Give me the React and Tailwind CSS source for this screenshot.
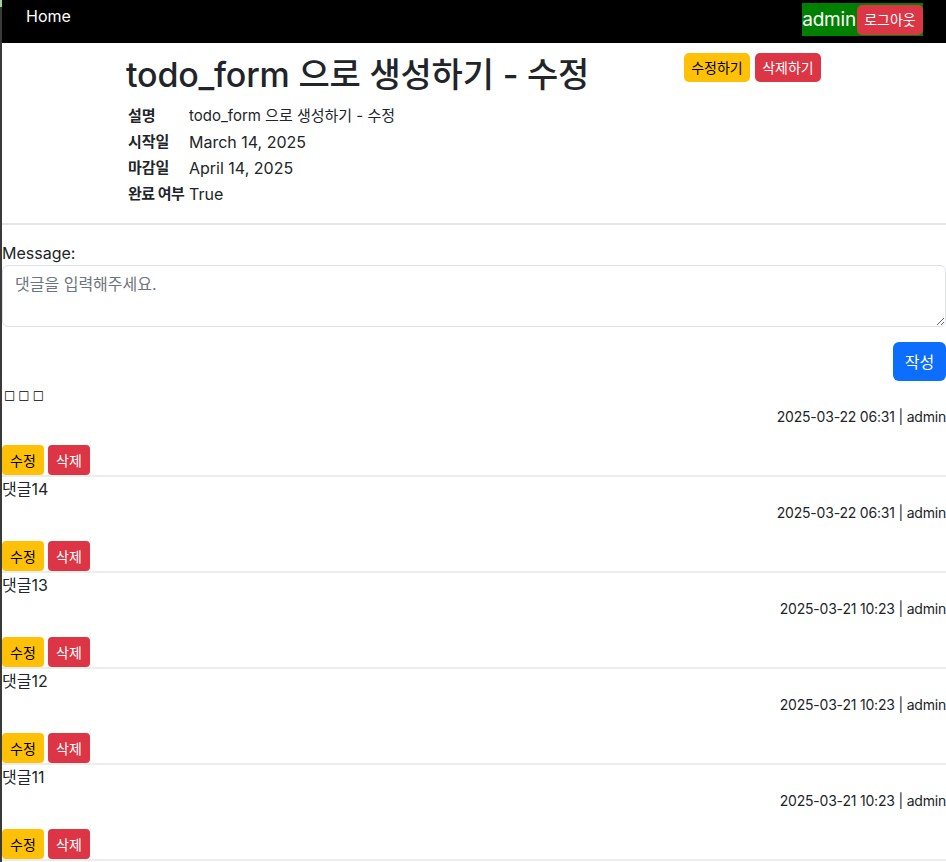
import React from "react";

const comments = [
  { text: "□□□", date: "2025-03-22 06:31", box: true },
  { text: "댓글14", date: "2025-03-22 06:31" },
  { text: "댓글13", date: "2025-03-21 10:23" },
  { text: "댓글12", date: "2025-03-21 10:23" },
  { text: "댓글11", date: "2025-03-21 10:23" },
];

export default function App() {
  return (
    <div
      className="flex min-h-[862px] bg-white text-[#212529]"
      style={{ fontFamily: "Inter, 'Noto Sans CJK KR', sans-serif" }}
    >
      <div className="w-[2px] shrink-0 flex flex-col">
        <div className="h-[7px] bg-[#9fd49f]" />
        <div className="flex-1 bg-[#3a3a3a]" />
      </div>
      <div className="flex-1 min-w-0">
        {/* Navbar */}
        <nav className="h-[43px] bg-black flex items-start justify-between">
          <a className="ml-[24px] mt-[5px] text-white text-[16px] leading-[22px]">Home</a>
          <div className="mr-[23px] mt-[3px] h-[33px] bg-[#008000] flex items-center">
            <span className="text-white text-[19px] leading-[24px] tracking-[-0.2px]">admin</span>
            <button className="ml-[1px] w-[66px] h-[30px] rounded-[5px] bg-[#dc3545] text-white text-[14px] leading-[20px]">
              로그아웃
            </button>
          </div>
        </nav>

        {/* Header */}
        <div className="w-[720px] mx-auto px-[12px] pt-[12px] -translate-x-[1px]">
          <div className="flex justify-between items-start">
            <h1 className="text-[34px] leading-[40px] font-medium ml-[1px] tracking-[-0.2px]">
              todo_form 으로 생성하기 - 수정
            </h1>
            <div className="flex gap-[5px] -mt-[2px]">
              <button className="w-[66px] h-[29px] rounded-[5px] bg-[#ffc107] text-black text-[14px]">수정하기</button>
              <button className="w-[66px] h-[29px] rounded-[5px] bg-[#dc3545] text-white text-[14px]">삭제하기</button>
            </div>
          </div>
          <div className="mt-[8px] ml-[3px] grid grid-cols-[61px_1fr] auto-rows-[26px] items-center">
            <div className="font-bold text-[15px] whitespace-nowrap">설명</div>
            <div className="text-[15px]">todo_form 으로 생성하기 - 수정</div>
            <div className="font-bold text-[15px] whitespace-nowrap">시작일</div>
            <div className="text-[16px]">March 14, 2025</div>
            <div className="font-bold text-[15px] whitespace-nowrap">마감일</div>
            <div className="text-[16px]">April 14, 2025</div>
            <div className="font-bold text-[15px] whitespace-nowrap tracking-[-0.5px]">완료 여부</div>
            <div className="text-[16px]">True</div>
          </div>
        </div>

        <hr className="mt-[16px] border-0 border-t-2 border-[#e5e5e5]" />

        {/* Form */}
        <div className="mt-[16px]">
          <label className="block text-[16px] leading-[24px]">Message:</label>
          <textarea
            rows={2}
            placeholder="댓글을 입력해주세요."
            className="block w-full h-[62px] border border-[#dee2e6] rounded-[6px] px-[12px] py-[6px] text-[16px] leading-[24px] placeholder:text-[#6c757d] outline-none"
          />
          <div className="flex justify-end mt-[15px]">
            <button className="w-[53px] h-[39px] rounded-[6px] bg-[#0d6efd] text-white text-[16px]">작성</button>
          </div>
        </div>

        {/* Comments */}
        <div>
          {comments.map((c, i) => (
            <div key={i} className="border-b-2 border-[#ececec]">
              <div className="h-[24px] text-[16px] leading-[24px]">
                {c.box ? (
                  <span
                    className="pl-[2px] tracking-[3px] text-[12px] text-black"
                    style={{ fontFamily: "'DejaVu Sans', sans-serif" }}
                  >
                    □□□
                  </span>
                ) : (
                  c.text
                )}
              </div>
              <div className="h-[24px] text-[14px] leading-[24px] text-right tracking-[-0.2px]">
                {c.date} | admin
              </div>
              <div className="mt-[16px] flex gap-[4px]">
                <button className="w-[42px] h-[30px] rounded-[4px] bg-[#ffc107] text-black text-[14px]">수정</button>
                <button className="w-[42px] h-[30px] rounded-[4px] bg-[#dc3545] text-white text-[14px]">삭제</button>
              </div>
            </div>
          ))}
        </div>
      </div>
    </div>
  );
}
